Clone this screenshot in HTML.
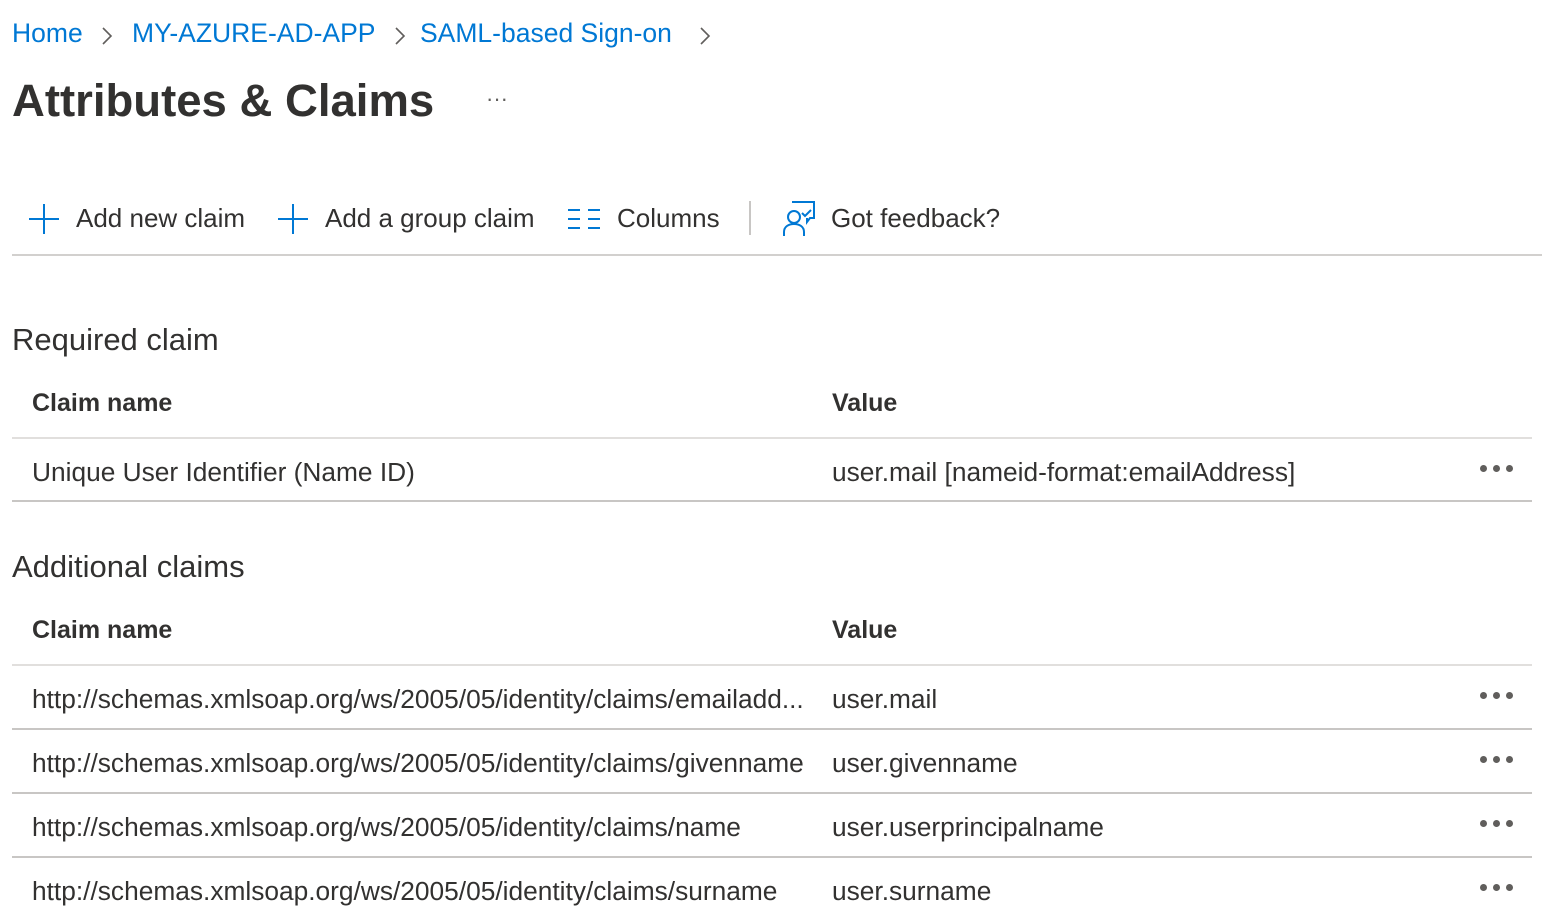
<!DOCTYPE html>
<html><head><style>
body{margin:0;width:1542px;height:914px;overflow:hidden;background:#fff;font-family:"Liberation Sans",sans-serif;color:#323130;position:relative}
.a{position:absolute;white-space:nowrap}
.bc{color:#0078d4;font-size:26.5px;top:18px}
.tb{font-size:26px;top:203px;color:#323130}
.h2{font-size:31px;top:322px}
.th{font-size:25px;font-weight:bold}
.td{font-size:26.3px}
.line{position:absolute;left:12px;width:1520px;height:2px;background:#e1dfdd}
.dline{background:#c8c6c4}
.dots{position:absolute;left:1480px;width:32px;height:8px}
.dots i{position:absolute;top:0;width:7px;height:7px;border-radius:50%;background:#605e5c}
</style></head><body>
<div class="a bc" style="left:12px">Home</div>
<svg class="a" style="left:101px;top:27px" width="12" height="18"><path d="M2 1L10 9L2 17" fill="none" stroke="#605e5c" stroke-width="1.6"/></svg>
<div class="a bc" style="left:132px">MY-AZURE-AD-APP</div>
<svg class="a" style="left:394px;top:27px" width="12" height="18"><path d="M2 1L10 9L2 17" fill="none" stroke="#605e5c" stroke-width="1.6"/></svg>
<div class="a bc" style="left:420px">SAML-based Sign-on</div>
<svg class="a" style="left:699px;top:27px" width="12" height="18"><path d="M2 1L10 9L2 17" fill="none" stroke="#605e5c" stroke-width="1.6"/></svg>
<div class="a" style="left:12px;top:75px;font-size:45.5px;font-weight:bold;color:#323130">Attributes &amp; Claims</div>
<div class="a" style="left:486px;top:86px;font-size:22px;color:#605e5c">···</div>

<svg class="a" style="left:28px;top:203px" width="32" height="32"><path d="M16 1V31M1 16H31" stroke="#0078d4" stroke-width="2"/></svg>
<div class="a tb" style="left:76px">Add new claim</div>
<svg class="a" style="left:277px;top:203px" width="32" height="32"><path d="M16 1V31M1 16H31" stroke="#0078d4" stroke-width="2"/></svg>
<div class="a tb" style="left:325px">Add a group claim</div>
<svg class="a" style="left:568px;top:208px" width="34" height="22"><path d="M0 2H12M20 2H32M0 11H12M20 11H32M0 20H12M20 20H32" stroke="#0078d4" stroke-width="2"/></svg>
<div class="a tb" style="left:617px">Columns</div>
<div class="a" style="left:749px;top:201px;width:2px;height:34px;background:#c8c6c4"></div>
<svg class="a" style="left:780px;top:200px" width="38" height="38"><g fill="none" stroke="#0078d4" stroke-width="2"><path d="M12 2H34V18H30L27 22V18"/><circle cx="14" cy="17" r="6"/><path d="M4 36V32C4 27 8 24 14 24C20 24 24 27 24 32V36"/><path d="M22 13L25 16L31 10"/></g></svg>
<div class="a tb" style="left:831px">Got feedback?</div>
<div class="a" style="left:12px;top:254px;width:1530px;height:2px;background:#d2d0ce"></div>

<div class="a h2" style="left:12px">Required claim</div>
<div class="a th" style="left:32px;top:389px">Claim name</div>
<div class="a th" style="left:832px;top:389px">Value</div>
<div class="line" style="top:437px"></div>
<div class="a td" style="left:32px;top:457px">Unique User Identifier (Name ID)</div>
<div class="a td" style="left:832px;top:457px">user.mail [nameid-format:emailAddress]</div>
<div class="dots" style="top:465px"><i style="left:0"></i><i style="left:13px"></i><i style="left:26px"></i></div>
<div class="line dline" style="top:500px"></div>

<div class="a h2" style="left:12px;top:549px">Additional claims</div>
<div class="a th" style="left:32px;top:616px">Claim name</div>
<div class="a th" style="left:832px;top:616px">Value</div>
<div class="line" style="top:664px"></div>

<div class="a td" style="left:32px;top:684px">http://schemas.xmlsoap.org/ws/2005/05/identity/claims/emailadd...</div>
<div class="a td" style="left:832px;top:684px">user.mail</div>
<div class="dots" style="top:692px"><i style="left:0"></i><i style="left:13px"></i><i style="left:26px"></i></div>
<div class="line dline" style="top:728px"></div>

<div class="a td" style="left:32px;top:748px">http://schemas.xmlsoap.org/ws/2005/05/identity/claims/givenname</div>
<div class="a td" style="left:832px;top:748px">user.givenname</div>
<div class="dots" style="top:756px"><i style="left:0"></i><i style="left:13px"></i><i style="left:26px"></i></div>
<div class="line dline" style="top:792px"></div>

<div class="a td" style="left:32px;top:812px">http://schemas.xmlsoap.org/ws/2005/05/identity/claims/name</div>
<div class="a td" style="left:832px;top:812px">user.userprincipalname</div>
<div class="dots" style="top:820px"><i style="left:0"></i><i style="left:13px"></i><i style="left:26px"></i></div>
<div class="line dline" style="top:856px"></div>

<div class="a td" style="left:32px;top:876px">http://schemas.xmlsoap.org/ws/2005/05/identity/claims/surname</div>
<div class="a td" style="left:832px;top:876px">user.surname</div>
<div class="dots" style="top:884px"><i style="left:0"></i><i style="left:13px"></i><i style="left:26px"></i></div>
</body></html>
